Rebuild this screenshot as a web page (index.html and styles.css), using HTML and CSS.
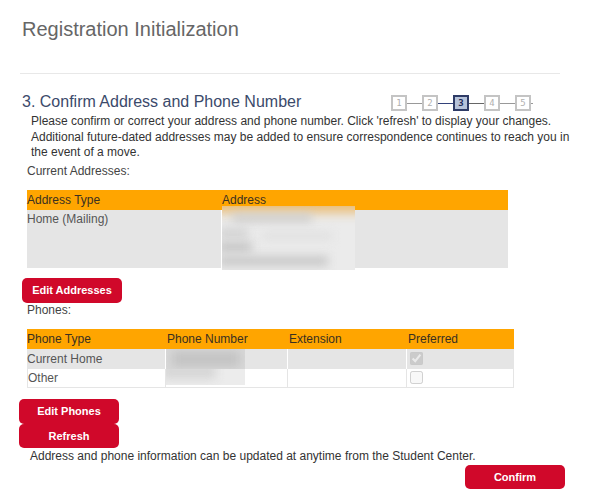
FILE: index.html
```html
<!DOCTYPE html>
<html lang="en">
<head>
<meta charset="utf-8">
<title>Registration Initialization</title>
<link rel="stylesheet" href="styles.css">
</head>
<body>
<div class="page">
  <h1 class="title">Registration Initialization</h1>
  <div class="rule"></div>
  <div class="step-head">
    <h2 class="step-title">3. Confirm Address and Phone Number</h2>
    <div class="steps">
      <span class="step">1</span><span class="link"></span>
      <span class="step">2</span><span class="link link-on"></span>
      <span class="step step-on">3</span><span class="link link-dark"></span>
      <span class="step">4</span><span class="link"></span>
      <span class="step">5</span><span class="link link-end"></span>
    </div>
  </div>
  <p class="intro">Please confirm or correct your address and phone number. Click 'refresh' to display your changes. Additional future-dated addresses may be added to ensure correspondence continues to reach you in the event of a move.</p>
  <div class="label label-addr">Current Addresses:</div>
  <table class="addr">
    <colgroup><col class="addr-c1"><col class="addr-c2"></colgroup>
    <thead>
      <tr><th>Address Type</th><th>Address</th></tr>
    </thead>
    <tbody>
      <tr>
        <td class="addr-type">Home (Mailing)</td>
        <td class="addr-val">
          <div class="blur-addr">
            <span class="ba ba-top"></span>
            <span class="ba ba-1"></span>
            <span class="ba ba-2"></span>
            <span class="ba ba-3"></span>
            <span class="ba ba-4"></span>
            <span class="ba ba-5"></span>
          </div>
        </td>
      </tr>
    </tbody>
  </table>
  <button class="btn btn-addr" type="button">Edit Addresses</button>
  <div class="label">Phones:</div>
  <table class="phones">
    <colgroup><col class="pc1"><col class="pc2"><col class="pc3"><col class="pc4"></colgroup>
    <thead>
      <tr><th>Phone Type</th><th>Phone Number</th><th>Extension</th><th>Preferred</th></tr>
    </thead>
    <tbody>
      <tr class="row-on">
        <td>Current Home</td>
        <td class="num"><div class="blur-ph blur-ph1"><span class="bp bp-1"></span></div></td>
        <td></td>
        <td class="pref"><input type="checkbox" checked disabled></td>
      </tr>
      <tr class="row-off">
        <td class="first">Other</td>
        <td class="num"><div class="blur-ph blur-ph2"><span class="bp bp-2"></span></div></td>
        <td></td>
        <td class="pref"><input type="checkbox" disabled></td>
      </tr>
    </tbody>
  </table>
  <div class="btn-stack">
    <button class="btn btn-phones" type="button">Edit Phones</button>
    <button class="btn btn-refresh" type="button">Refresh</button>
  </div>
  <p class="note">Address and phone information can be updated at anytime from the Student Center.</p>
  <div class="actions">
    <button class="btn btn-confirm" type="button">Confirm</button>
  </div>
</div>
</body>
</html>
```
FILE: styles.css
```css
body {
  margin: 0;
  background: #fff;
  font-family: "Liberation Sans", Arial, sans-serif;
  font-size: 12px;
  color: #333;
}

.page {
  width: 591px;
}

.title {
  margin: 17px 0 0 22px;
  font-size: 20px;
  line-height: 24px;
  font-weight: normal;
  color: #666;
}

.rule {
  margin: 32px 0 0 20px;
  width: 540px;
  height: 1px;
  background: #e8e8e8;
}

.step-head {
  display: flex;
  justify-content: space-between;
  align-items: flex-start;
  margin: 18px 0 0 22px;
  width: 511px;
}

.step-title {
  margin: 0;
  font-size: 16px;
  line-height: 20px;
  font-weight: normal;
  color: #3b4a6b;
}

.steps {
  display: flex;
  align-items: center;
  margin-top: 3px;
}

.step {
  box-sizing: border-box;
  width: 16px;
  height: 16px;
  border: 2px solid #c4c4c4;
  background: #fff;
  color: #b0b0b0;
  font-family: "DejaVu Sans Mono", monospace;
  font-size: 9px;
  line-height: 12px;
  text-align: center;
}

.step-on {
  border-color: #2e3b66;
  background: #b6c3da;
  color: #1f2a55;
  font-weight: bold;
}

.link {
  width: 15px;
  height: 1px;
  background: #999;
}

.link-on {
  background: #33427a;
}

.link-dark {
  background: #666;
}

.link-end {
  width: 2px;
}

.intro {
  margin: 2px 0 0 31px;
  width: 548px;
  font-size: 12px;
  line-height: 15.5px;
  color: #333;
}

.label {
  margin: 0 0 0 27px;
  font-size: 12px;
  line-height: 15px;
  color: #444;
}

.label-addr {
  margin-top: 3px;
}

table {
  border-collapse: separate;
  border-spacing: 0;
  table-layout: fixed;
  font-size: 12px;
}

th {
  height: 20px;
  padding: 0;
  background: #ffa500;
  color: #3a3020;
  font-weight: normal;
  text-align: left;
  vertical-align: middle;
}

.addr {
  margin: 11px 0 0 27px;
  width: 481px;
}

.addr-c1 {
  width: 195px;
}

.addr-c2 {
  width: 286px;
}

.addr td {
  padding: 0;
  background: #e5e5e5;
  vertical-align: top;
}

.addr-type {
  padding-top: 2px !important;
  border-right: 1px solid #fff;
  color: #555;
}

.blur-addr {
  position: relative;
  width: 133px;
  height: 64px;
  margin: -4px 0 -2px 0;
  background: #ebebeb;
  overflow: hidden;
}

.ba {
  position: absolute;
  display: block;
  background: #c8c8c8;
  filter: blur(5px);
}

.ba-top {
  left: -10px;
  top: -10px;
  width: 160px;
  height: 16px;
  background: #eab86a;
  filter: blur(6px);
}

.ba-1 {
  left: 10px;
  top: 8px;
  width: 80px;
  height: 8px;
  background: #cccccc;
}

.ba-2 {
  left: -4px;
  top: 22px;
  width: 30px;
  height: 10px;
  background: #d2d2d2;
}

.ba-3 {
  left: -4px;
  top: 36px;
  width: 34px;
  height: 10px;
  background: #c4c4c4;
}

.ba-4 {
  left: -4px;
  top: 50px;
  width: 110px;
  height: 10px;
  background: #c8c8c8;
}

.ba-5 {
  left: 40px;
  top: 26px;
  width: 70px;
  height: 8px;
  background: #e0e0e0;
}

.btn {
  display: block;
  box-sizing: border-box;
  width: 100px;
  height: 25px;
  padding: 0;
  border: 0;
  border-radius: 5px;
  background: #d0082a;
  color: #fff;
  font-family: "Liberation Sans", Arial, sans-serif;
  font-size: 11px;
  font-weight: bold;
  text-align: center;
}

.btn-addr {
  margin: 10px 0 0 22px;
}

.phones {
  margin: 11px 0 0 27px;
  width: 487px;
}

.pc1 {
  width: 139px;
}

.pc2 {
  width: 122px;
}

.pc3 {
  width: 119px;
}

.pc4 {
  width: 107px;
}

.phones th {
  padding-left: 0;
}

.phones th + th {
  padding-left: 1px;
}

.phones td {
  padding: 0;
  vertical-align: middle;
  color: #555;
}

.row-on td {
  height: 20px;
  background: #e5e5e5;
  border-right: 1px solid #fff;
}

.row-on td:last-child {
  border-right: 0;
}

.row-off td {
  height: 18px;
  background: #fff;
  border-right: 1px solid #e5e5e5;
  border-bottom: 1px solid #e5e5e5;
}

.row-off td.first {
  border-left: 1px solid #e5e5e5;
}

.phones td.num {
  vertical-align: top;
}

.blur-ph {
  position: relative;
  width: 79px;
  overflow: hidden;
}

.blur-ph1 {
  height: 20px;
  background: #d8d8d8;
}

.blur-ph2 {
  height: 16px;
  background: #ececec;
}

.bp {
  position: absolute;
  display: block;
  filter: blur(5px);
}

.bp-1 {
  left: 6px;
  top: 2px;
  width: 68px;
  height: 16px;
  background: #c4c4c4;
}

.bp-2 {
  left: -4px;
  top: -6px;
  width: 54px;
  height: 16px;
  background: #d6d6d6;
}

.pref input {
  display: block;
  width: 13px;
  height: 13px;
  margin: 0 0 0 3px;
}

.btn-stack {
  margin: 11px 0 0 19px;
}

.btn-refresh {
  height: 24px;
}

.note {
  margin: 1px 0 0 30px;
  font-size: 12px;
  line-height: 15px;
  color: #333;
}

.actions {
  display: flex;
  margin: 1px 0 0 465px;
}

.btn-confirm {
  height: 24px;
}
```
